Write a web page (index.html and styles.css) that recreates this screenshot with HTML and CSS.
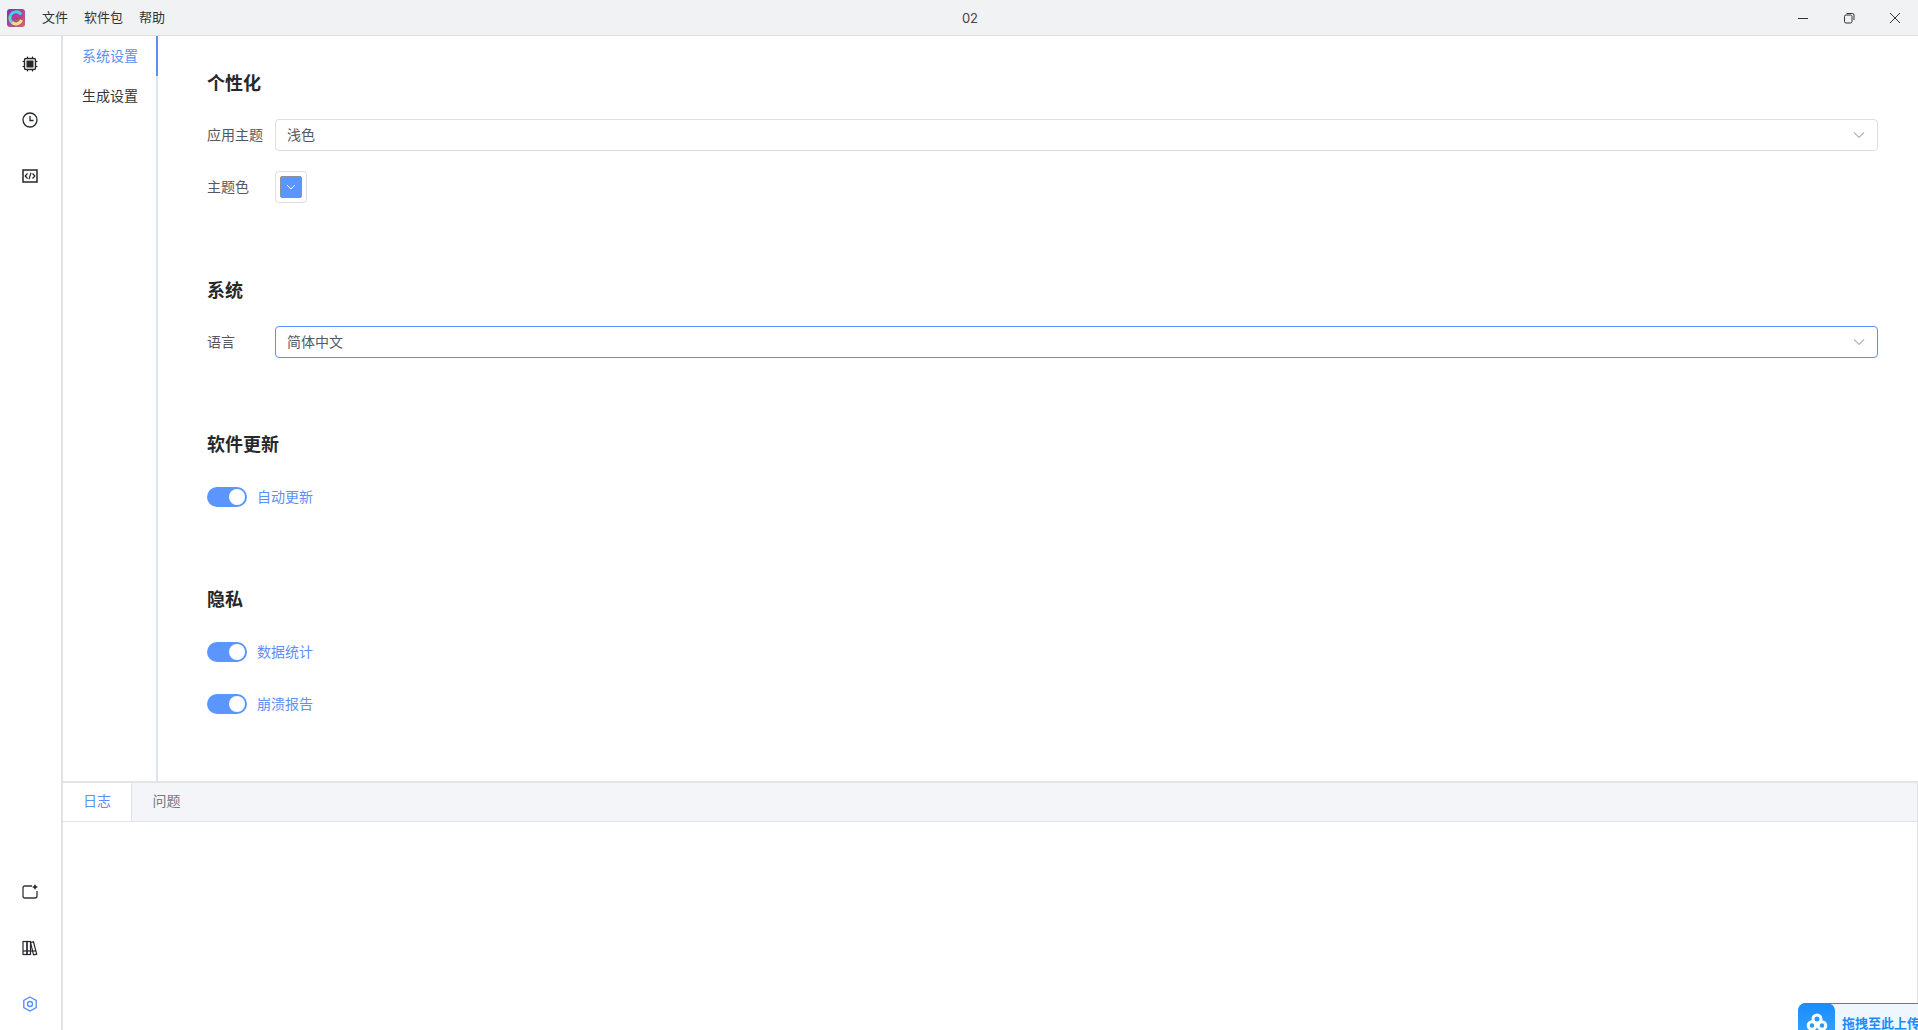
FILE: index.html
```html
<!DOCTYPE html>
<html lang="zh-CN">
<head>
<meta charset="utf-8">
<title>02</title>
<link rel="stylesheet" href="styles.css">
</head>
<body>
<div class="app">
  <header class="titlebar">
    <svg class="logo" viewBox="0 0 18 18" width="18" height="18">
      <defs><linearGradient id="lg" x1="0" y1="0" x2="1" y2="1"><stop offset="0" stop-color="#7b2fc0"/><stop offset="1" stop-color="#d8607a"/></linearGradient></defs>
      <rect width="18" height="18" rx="3" fill="url(#lg)"/>
      <path d="M14 5.500A6 6 0 0 0 3.500 6.500" fill="none" stroke="#4fd0d8" stroke-width="3"/>
      <path d="M3.500 6.500A6 6 0 0 0 5 13.500" fill="none" stroke="#58dcc0" stroke-width="3"/>
      <path d="M5 13.500A6 6 0 0 0 14.500 11" fill="none" stroke="#e4e878" stroke-width="3"/>
      <path d="M8 8.800h6.500" stroke="#b8406a" stroke-width="2"/>
    </svg>
    <nav class="menus"><span>文件</span><span>软件包</span><span>帮助</span></nav>
    <div class="wintitle">02</div>
    <div class="winbtns">
      <svg viewBox="0 0 12 12" width="12" height="12"><path d="M1 6.500h10" stroke="#333" fill="none"/></svg>
      <svg viewBox="0 0 12 12" width="12" height="12"><rect x="1.500" y="3" width="7.500" height="8" rx="1.500" fill="none" stroke="#333"/><path d="M3.500 1.500h6a1.500 1.500 0 0 1 1.500 1.500V8" fill="none" stroke="#333"/></svg>
      <svg viewBox="0 0 12 12" width="12" height="12"><path d="M1 1l10 10M11 1L1 11" stroke="#333" fill="none"/></svg>
    </div>
  </header>
  <div class="body">
    <aside class="rail">
      <div class="rail-group">
        <div class="rail-btn"><svg viewBox="0 0 16 16" width="16" height="16" fill="none" stroke="#24272c"><rect x="2.500" y="2.500" width="11" height="11" rx="1.500" stroke-width="1.400"/><rect x="4.500" y="4.500" width="7" height="7" fill="#24272c" stroke="none"/><path d="M5.500 0.500v2M10.500 0.500v2M5.500 13.500v2M10.500 13.500v2M0.500 5.500h2M0.500 10.500h2M13.500 5.500h2M13.500 10.500h2"/></svg></div>
        <div class="rail-btn"><svg viewBox="0 0 16 16" width="16" height="16" fill="none" stroke="#24272c" stroke-width="1.300"><circle cx="8" cy="8" r="7"/><path d="M8 4v4.500h3.500"/></svg></div>
        <div class="rail-btn"><svg viewBox="0 0 16 16" width="16" height="16" fill="none" stroke="#24272c"><rect x="1" y="2" width="14" height="12" stroke-width="1.500"/><path d="M5.500 5.500L3.200 8l2.300 2.500M10.500 5.500L12.800 8l-2.300 2.500M9 4.800L7 11.200" stroke-width="1.200"/></svg></div>
      </div>
      <div class="rail-group">
        <div class="rail-btn"><svg viewBox="0 0 16 16" width="16" height="16" fill="none" stroke="#33363c" stroke-width="1.300"><path d="M10 2H3a2 2 0 0 0-2 2v8a2 2 0 0 0 2 2h10a2 2 0 0 0 2-2V7"/><path d="M13 0l1 2 2 1-2 1-1 2-1-2-2-1 2-1z" fill="#24272c" stroke="none"/></svg></div>
        <div class="rail-btn"><svg viewBox="0 0 16 16" width="16" height="16" fill="none" stroke="#24272c" stroke-width="1.200"><rect x="1" y="1.500" width="4" height="13"/><rect x="5" y="1.500" width="3.500" height="13"/><path d="M8.500 2.500l3-.7 3.200 12.400-3.200.6z"/><path d="M1 11h13"/></svg></div>
        <div class="rail-btn"><svg viewBox="0 0 16 16" width="16" height="16" fill="none" stroke="#5b8ffa" stroke-width="1.400"><path d="M8 1l6.200 3.500v7L8 15l-6.200-3.500v-7z"/><circle cx="8" cy="8" r="2.500"/></svg></div>
      </div>
    </aside>
    <div class="main">
      <div class="top">
        <nav class="subnav">
          <div class="subnav-item active">系统设置</div>
          <div class="subnav-item">生成设置</div>
        </nav>
        <section class="settings">
          <h2>个性化</h2>
          <div class="row">
            <label class="lbl">应用主题</label>
            <div class="select"><span>浅色</span><svg class="chev" viewBox="0 0 12 8" width="12" height="8"><path d="M1 1.500l5 5 5-5" fill="none" stroke="#b4b6bc" stroke-width="1.200"/></svg></div>
          </div>
          <div class="row row-next">
            <label class="lbl">主题色</label>
            <div class="picker"><div class="swatch"><svg viewBox="0 0 10 6" width="10" height="6"><path d="M1 1l4 4 4-4" fill="none" stroke="#fff"/></svg></div></div>
          </div>
          <h2 class="sec-system">系统</h2>
          <div class="row">
            <label class="lbl">语言</label>
            <div class="select focus"><span>简体中文</span><svg class="chev" viewBox="0 0 12 8" width="12" height="8"><path d="M1 1.500l5 5 5-5" fill="none" stroke="#b4b6bc" stroke-width="1.200"/></svg></div>
          </div>
          <h2 class="sec-update">软件更新</h2>
          <div class="toggle-row"><span class="switch"></span><span class="tlabel">自动更新</span></div>
          <h2 class="sec-privacy">隐私</h2>
          <div class="toggle-row"><span class="switch"></span><span class="tlabel">数据统计</span></div>
          <div class="toggle-row"><span class="switch"></span><span class="tlabel">崩溃报告</span></div>
        </section>
      </div>
      <div class="panel">
        <div class="tabs"><div class="tab active">日志</div><div class="tab">问题</div></div>
        <div class="panel-body"></div>
      </div>
    </div>
  </div>
  <div class="upload">
    <div class="upload-icon"><svg viewBox="0 0 22 18" width="22" height="18" fill="none" stroke="#fff" stroke-width="3"><circle cx="11" cy="6" r="4"/><circle cx="6" cy="12.500" r="3.800"/><circle cx="16" cy="12.500" r="3.800"/></svg></div>
    <span>拖拽至此上传</span>
  </div>
</div>
</body>
</html>
```
FILE: styles.css
```css
* { box-sizing: border-box; }
html, body { margin: 0; height: 100%; overflow: hidden; background: #fff; }
body { font-family: "Inter", "Noto Sans CJK SC", sans-serif; font-size: 14px; color: #333639; }
.app { position: relative; width: 100%; height: 1030px; display: flex; flex-direction: column; overflow: hidden; }
.titlebar { height: 36px; flex: none; display: flex; align-items: center; background: #f1f2f4; border-bottom: 1px solid #dcdfe6; position: relative; padding-left: 7px; }
.logo { flex: none; }
.menus { display: flex; gap: 16px; margin-left: 17px; font-size: 13px; color: #303236; padding-bottom: 2px; }
.wintitle { position: absolute; left: 22px; right: 0; top: 0; height: 36px; line-height: 36px; text-align: center; font-size: 13px; color: #444; pointer-events: none; }
.winbtns { margin-left: auto; display: flex; gap: 34px; padding-right: 17px; align-items: center; }
.body { flex: 1; display: flex; min-height: 0; }
.rail { width: 63px; flex: none; border-right: 2px solid #dfe2e8; padding-right: 1px; display: flex; flex-direction: column; justify-content: space-between; }
.rail-btn { height: 56px; display: flex; align-items: center; justify-content: center; }
.rail-group:last-child { margin-bottom: -2px; }
.main { flex: 1; min-width: 0; display: flex; flex-direction: column; }
.top { height: 745px; flex: none; display: flex; }
.subnav { width: 95px; flex: none; border-right: 2px solid #dfe2f0; }
.subnav-item { height: 40px; line-height: 40px; padding-left: 19px; font-size: 14px; color: #333639; margin-right: -2px; }
.subnav-item.active { color: #5b8ffa; border-right: 2px solid #5b8ffa; }
.settings { flex: 1; min-width: 0; padding: 36px 40px 0 49px; }
h2 { margin: 0; font-size: 18px; font-weight: 700; line-height: 24px; color: #26282b; }
.row { display: flex; align-items: center; height: 32px; margin-top: 23px; }
.row-next { margin-top: 20px; }
.lbl { width: 68px; flex: none; font-size: 14px; color: #55585e; padding-bottom: 2px; }
.select { flex: 1; height: 32px; border: 1px solid #dcdee6; border-radius: 4px; display: flex; align-items: center; justify-content: space-between; padding: 0 12px 0 11px; font-size: 14px; color: #55585e; }
.select span { padding-bottom: 2px; }
.select.focus { border-color: #5b8ffa; }
.picker { width: 32px; height: 32px; border: 1px solid #dcdee6; border-radius: 4px; display: flex; align-items: center; justify-content: center; }
.swatch { width: 22px; height: 22px; background: #5b96ff; border: 1px solid #8f8f99; border-radius: 2px; display: flex; align-items: center; justify-content: center; }
.sec-system { margin-top: 76px; }
.sec-update { margin-top: 75px; }
.sec-privacy { margin-top: 81px; }
.toggle-row { display: flex; align-items: center; height: 20px; margin-top: 32px; }
h2 + .toggle-row { margin-top: 30px; }
.switch { width: 40px; height: 20px; border-radius: 10px; background: #5b96ff; position: relative; flex: none; }
.switch::after { content: ""; position: absolute; right: 2px; top: 2px; width: 16px; height: 16px; border-radius: 50%; background: #fff; }
.tlabel { margin-left: 10px; color: #5b8ffa; font-size: 14px; line-height: 20px; height: 20px; }
.panel { flex: 1; min-height: 0; border-top: 2px solid #e2e4ea; border-right: 1px solid #dfe2e8; display: flex; flex-direction: column; }
.tabs { height: 39px; flex: none; display: flex; background: #f4f5f9; border-bottom: 1px solid #dfe2e8; }
.tab { width: 69px; text-align: center; line-height: 36px; font-size: 14px; color: #777a80; }
.tab.active { background: #fff; color: #5b8ffa; border-right: 1px solid #dfe2e8; height: 38px; }
.panel-body { flex: 1; }
.upload { position: absolute; left: 1798px; top: 1003px; width: 160px; height: 40px; background: #eef7ff; border-top: 1px solid #1a8cff; border-radius: 8px 0 0 0; display: flex; align-items: flex-start; font-size: 13px; font-weight: 700; color: #1a8cff; }
.upload-icon { width: 37px; height: 37px; flex: none; background: linear-gradient(#1a8cff, #35a5ff); border-radius: 8px; display: flex; align-items: flex-start; justify-content: center; margin: -1px 7px 0 0; padding-top: 10px; }
.upload span { white-space: nowrap; margin-top: 9px; }
```
